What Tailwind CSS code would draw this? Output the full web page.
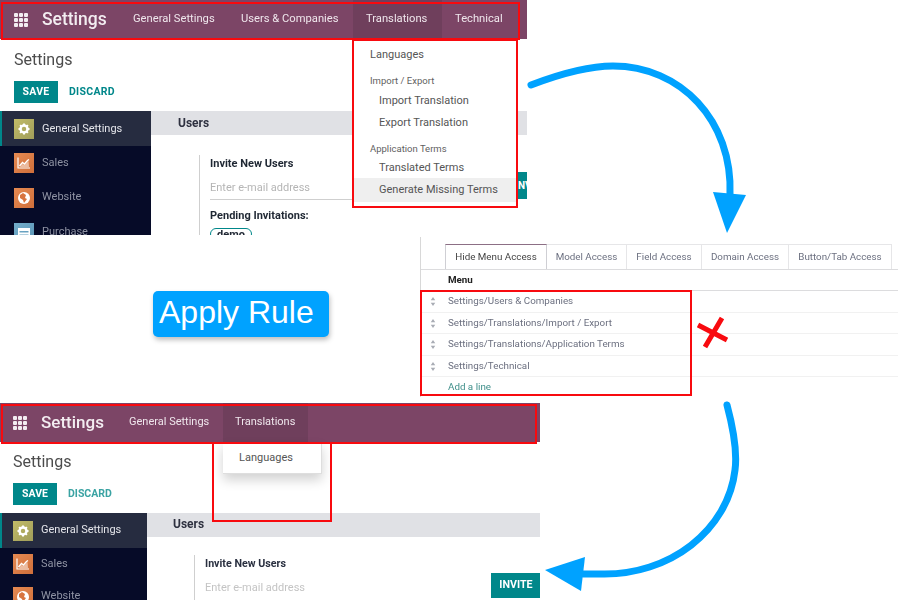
<!DOCTYPE html>
<html lang="en">
<head>
<meta charset="UTF-8">
<title>Menu access rule</title>
<script src="https://cdn.jsdelivr.net/npm/@tailwindcss/browser@4"></script>
</head>
<body class="bg-white font-['Roboto',sans-serif]">
<!-- shared icons -->
<svg class="hidden">
  <symbol id="apps" viewBox="0 0 14 14"><g fill="#f3edf1"><rect width="4" height="4" rx="1"/><rect x="5" width="4" height="4" rx="1"/><rect x="10" width="4" height="4" rx="1"/><rect y="5" width="4" height="4" rx="1"/><rect x="5" y="5" width="4" height="4" rx="1"/><rect x="10" y="5" width="4" height="4" rx="1"/><rect y="10" width="4" height="4" rx="1"/><rect x="5" y="10" width="4" height="4" rx="1"/><rect x="10" y="10" width="4" height="4" rx="1"/></g></symbol>
  <symbol id="gear" viewBox="0 0 24 24"><circle cx="12" cy="12" r="7" fill="none" stroke="white" stroke-width="5"/><path d="M12 1v22M1 12h22M4.200 4.200l15.600 15.600M19.800 4.200L4.200 19.800" stroke="white" stroke-width="4" stroke-dasharray="5 12"/></symbol>
  <symbol id="chart" viewBox="0 0 14 14"><path d="M1 1.500V12h12" fill="none" stroke="white" stroke-width="1.200"/><path d="M2.500 10l3-3.500 2 1.500 3-3.500 1.500-1" fill="none" stroke="white" stroke-width="1.400"/><path d="M3 11h9l-.5-6-4 4-2-1z" fill="white" opacity=".5"/></symbol>
  <symbol id="globe" viewBox="0 0 14 14"><circle cx="7" cy="7" r="6" fill="white"/><path d="M3 4l3-2 3 2-1 3 2 1-3 4-1-3-3-2z" fill="#d8743f"/></symbol>
  <symbol id="card" viewBox="0 0 14 14"><path d="M1 2h12v11H1zM2.500 5v1.500h9V5zm0 3.500V10h9V8.500z" fill="white" fill-rule="evenodd"/></symbol>
  <symbol id="handle" viewBox="0 0 6 10"><path d="M3 0l2.500 3.500h-5zM3 10L.5 6.500h5z" fill="#a9acb4"/></symbol>
</svg>

<div class="relative w-[898px] h-[600px] overflow-hidden bg-white">

  <!-- Screenshot 1: full menu -->
  <section class="absolute left-0 top-0 w-[527px] h-[235px] overflow-hidden bg-white blur-[0.35px]">
    <nav class="flex items-center h-[39px] bg-[#7c4566] text-[#efe6ec] text-[11.2px]">
      <svg class="ml-[14px] w-[14px] h-[14px]"><use href="#apps"/></svg>
      <span class="ml-[14px] w-[91px] text-[17.5px] font-medium text-[#f3edf1]">Settings</span>
      <span class="w-[108px]">General Settings</span>
      <span class="w-[112px]">Users &amp; Companies</span>
      <span class="flex items-center h-full w-[89px] pl-[13px] bg-[#6f3f5c]">Translations</span>
      <span class="pl-[13px]">Technical</span>
    </nav>
    <h1 class="mt-[11px] ml-[14px] text-[16px] leading-[19px] text-[#4c4c4c]">Settings</h1>
    <div class="flex items-center mt-[12px] ml-[14px] h-[22px] text-[10.5px] font-bold tracking-[0.3px]">
      <span class="flex items-center justify-center w-[44px] h-full bg-[#00878a] text-white">SAVE</span>
      <span class="ml-[11px] text-[#00878a]">DISCARD</span>
    </div>
    <div class="flex mt-[8px] h-[124px]">
      <aside class="w-[151px] bg-[#060b28] text-[11px] text-[#8f93a3]">
        <div class="flex items-center h-[35px] border-l-2 border-[#00878a] bg-[#262c40] pl-[12px] pt-[1px] text-[#e4e5ea]">
          <span class="flex items-center justify-center w-[20px] h-[20px] bg-linear-to-br from-[#c2bc68] to-[#a09d5a]"><svg class="w-[12px] h-[12px]"><use href="#gear"/></svg></span>
          <span class="ml-[8px]">General Settings</span>
        </div>
        <div class="flex items-center h-[34px] pl-[14px]">
          <span class="flex items-center justify-center w-[20px] h-[20px] bg-linear-to-br from-[#e58a52] to-[#cf6f3b]"><svg class="w-[14px] h-[14px]"><use href="#chart"/></svg></span>
          <span class="ml-[8px]">Sales</span>
        </div>
        <div class="flex items-center h-[35px] pl-[14px]">
          <span class="flex items-center justify-center w-[20px] h-[20px] bg-linear-to-br from-[#e58a52] to-[#cf6f3b]"><svg class="w-[14px] h-[14px]"><use href="#globe"/></svg></span>
          <span class="ml-[8px]">Website</span>
        </div>
        <div class="flex items-center h-[35px] pl-[14px]">
          <span class="flex items-center justify-center w-[20px] h-[20px] bg-linear-to-br from-[#74aecb] to-[#5b95b6]"><svg class="w-[14px] h-[14px]"><use href="#card"/></svg></span>
          <span class="ml-[8px]">Purchase</span>
        </div>
      </aside>
      <div class="flex-1">
        <div class="h-[24px] pl-[27px] bg-[#e0e1e5] text-[12px] font-bold leading-[24px] text-[#2e3140]">Users</div>
        <div class="ml-[48px] mt-[20px] h-[80px] border-l border-[#cfcfcf] pl-[10px] text-[#1f2733] text-[11px] font-bold">
          <div class="pt-[1px]">Invite New Users</div>
          <div class="mt-[7px] w-[150px] pb-[3px] border-b border-[#cfcfcf] text-[11px] font-normal text-[#b5b5b5]">Enter e-mail address</div>
          <div class="mt-[8px]">Pending Invitations:</div>
          <span class="inline-block mt-[3px] h-[12px] px-[6px] rounded-[8px] border border-[#00878a] text-[11px] leading-[12px]">demo</span>
        </div>
      </div>
    </div>
  </section>
  <div class="absolute left-[518px] top-[172px] w-[9px] h-[27px] bg-[#00878a] text-white text-[10px] font-bold leading-[27px] overflow-hidden">NV</div>

  <!-- dropdown of screenshot 1 -->
  <div class="absolute left-[352px] top-[39px] w-[166px] h-[169px] border-2 border-[#f80a0f] bg-white text-[11px] text-[#555] pt-[6px]">
    <div class="pl-[16px] leading-[16px]">Languages</div>
    <div class="pl-[16px] mt-[12px] text-[9.500px] leading-[12px] text-[#5f5f5f]">Import / Export</div>
    <div class="pl-[25px] mt-[6px] leading-[16px]">Import Translation</div>
    <div class="pl-[25px] mt-[6px] leading-[16px]">Export Translation</div>
    <div class="pl-[16px] mt-[12px] text-[9.500px] leading-[12px] text-[#5f5f5f]">Application Terms</div>
    <div class="pl-[25px] mt-[5px] leading-[16px]">Translated Terms</div>
    <div class="pl-[25px] mt-[2px] h-[24px] leading-[24px] bg-[#efefef]">Generate Missing Terms</div>
  </div>
  <!-- red frame around navbar 1 -->
  <div class="absolute left-[1px] top-[2px] w-[519px] h-[38px] border-2 border-[#f80a0f]"></div>

  <!-- Apply Rule label -->
  <div class="absolute left-[153px] top-[291px] flex items-center w-[176px] h-[46px] pl-[6px] pb-[5px] rounded-[5px] bg-[#00a2ff] text-white text-[32px] font-['Liberation_Sans',sans-serif] shadow-[1px_3px_5px_rgba(0,0,0,0.25)]">Apply Rule</div>

  <!-- Screenshot 2: access tabs -->
  <section class="absolute left-[420px] top-[237px] w-[478px] h-[160px] overflow-hidden border-l border-[#d8d8d8] bg-white text-[9.800px] text-[#6c7080] blur-[0.5px]">
    <div class="flex mt-[7px] ml-[24px] h-[25px] leading-[24px] text-center">
      <span class="w-[102px] bg-white border border-b-0 border-[#cfcfd4] border-t-[#8c6f85] text-[#444]">Hide Menu Access</span>
      <span class="w-[80px] border-t border-r border-[#e6e6e8]">Model Access</span>
      <span class="w-[75px] border-t border-r border-[#e6e6e8]">Field Access</span>
      <span class="w-[87px] border-t border-r border-[#e6e6e8]">Domain Access</span>
      <span class="w-[103px] border-t border-r border-[#e6e6e8]">Button/Tab Access</span>
    </div>
    <div class="h-[22px] border-t border-b border-[#dcdcde] pl-[27px] text-[#222] font-bold leading-[20px]">Menu</div>
    <div class="flex items-center h-[22px] border-b border-[#f1f1f1]"><span class="w-[27px] pl-[9px]"><svg class="w-[6px] h-[9px]"><use href="#handle"/></svg></span><span>Settings/Users &amp; Companies</span></div>
    <div class="flex items-center h-[21px] border-b border-[#f1f1f1]"><span class="w-[27px] pl-[9px]"><svg class="w-[6px] h-[9px]"><use href="#handle"/></svg></span><span>Settings/Translations/Import / Export</span></div>
    <div class="flex items-center h-[22px] border-b border-[#f1f1f1]"><span class="w-[27px] pl-[9px]"><svg class="w-[6px] h-[9px]"><use href="#handle"/></svg></span><span>Settings/Translations/Application Terms</span></div>
    <div class="flex items-center h-[21px] border-b border-[#f1f1f1]"><span class="w-[27px] pl-[9px]"><svg class="w-[6px] h-[9px]"><use href="#handle"/></svg></span><span>Settings/Technical</span></div>
    <div class="pl-[27px] h-[20px] leading-[20px] text-[#3f8f8a]">Add a line</div>
  </section>
  <div class="absolute left-[420px] top-[290px] w-[272px] h-[106px] border-2 border-[#f80a0f]"></div>

  <!-- Screenshot 3: filtered menu -->
  <section class="absolute left-0 top-[403px] w-[540px] h-[197px] overflow-hidden bg-white blur-[0.45px]">
    <nav class="flex items-center h-[39px] bg-[#7c4566] text-[#efe6ec] text-[11px]">
      <svg class="ml-[13px] w-[14px] h-[14px]"><use href="#apps"/></svg>
      <span class="ml-[14px] w-[88px] text-[17px] font-medium text-[#f3edf1]">Settings</span>
      <span class="w-[94px]">General Settings</span>
      <span class="flex items-center h-full w-[85px] pl-[12px] bg-[#6f3f5c]">Translations</span>
    </nav>
    <h2 class="mt-[10px] ml-[13px] text-[16px] leading-[19px] text-[#4c4c4c]">Settings</h2>
    <div class="flex items-center mt-[12px] ml-[13px] h-[22px] text-[10.500px] font-bold">
      <span class="flex items-center justify-center w-[44px] h-full bg-[#00878a] text-white">SAVE</span>
      <span class="ml-[11px] text-[#3aa3a3]">DISCARD</span>
    </div>
    <div class="flex mt-[8px] h-[90px]">
      <aside class="w-[147px] bg-[#060b28] text-[11px] text-[#8f93a3]">
        <div class="flex items-center h-[35px] border-l-2 border-[#00878a] bg-[#262c40] pl-[11px] text-[#e4e5ea]">
          <span class="flex items-center justify-center w-[20px] h-[20px] bg-linear-to-br from-[#c2bc68] to-[#a09d5a]"><svg class="w-[12px] h-[12px]"><use href="#gear"/></svg></span>
          <span class="ml-[8px]">General Settings</span>
        </div>
        <div class="flex items-center h-[32px] pl-[13px]">
          <span class="flex items-center justify-center w-[20px] h-[20px] bg-linear-to-br from-[#e58a52] to-[#cf6f3b]"><svg class="w-[14px] h-[14px]"><use href="#chart"/></svg></span>
          <span class="ml-[8px]">Sales</span>
        </div>
        <div class="flex items-center h-[33px] pl-[13px]">
          <span class="flex items-center justify-center w-[20px] h-[20px] bg-linear-to-br from-[#e58a52] to-[#cf6f3b]"><svg class="w-[14px] h-[14px]"><use href="#globe"/></svg></span>
          <span class="ml-[8px]">Website</span>
        </div>
      </aside>
      <div class="flex-1">
        <div class="h-[24px] pl-[26px] bg-[#e0e1e5] text-[12px] font-bold leading-[23px] text-[#2e3140]">Users</div>
        <div class="relative ml-[47px] mt-[18px] h-[60px] border-l border-[#cfcfcf] pl-[10px] text-[#2a3040] text-[10.700px] font-bold">
          <div class="pt-[1px]">Invite New Users</div>
          <div class="mt-[8px] w-[286px] pb-[3px] border-b border-[#cfcfcf] text-[11px] font-normal text-[#c4c4c4]">Enter e-mail address</div>
          <span class="absolute right-[-1px] top-[18px] flex items-center justify-center w-[50px] h-[25px] bg-[#00878a] text-white">INVITE</span>
        </div>
      </div>
    </div>
  </section>

  <!-- dropdown of screenshot 3 -->
  <div class="absolute left-[223px] top-[442px] flex items-center w-[99px] h-[32px] pl-[16px] pt-[1px] bg-white border-r border-b border-[#dedede] text-[11px] text-[#555] shadow-[0_6px_12px_rgba(0,0,0,0.18)]">Languages</div>
  <div class="absolute left-[212px] top-[443px] w-[120px] h-[79px] border-2 border-t-0 border-[#f80a0f]"></div>
  <div class="absolute left-[1px] top-[404px] w-[536px] h-[40px] border-2 border-[#f80a0f]"></div>

  <!-- arrows and cross drawn over the screenshots -->
  <svg class="absolute left-0 top-0 w-[898px] h-[600px] pointer-events-none" viewBox="0 0 898 600" fill="none">
    <path d="M531 85C565 72 590 66 613 66C680 66 733 120 730 195" stroke="#00a2ff" stroke-width="7" stroke-linecap="round"/>
    <path d="M713 192L746 195L727 233Z" fill="#00a2ff"/>
    <path d="M727 405C735 435 737 455 735 470C728 530 670 576 600 574L583 574" stroke="#00a2ff" stroke-width="7" stroke-linecap="round"/>
    <path d="M545 570L585 557L581 591Z" fill="#00a2ff"/>
    <path d="M698 325L727 340M722 318L705 347" stroke="#f80a0f" stroke-width="5"/>
  </svg>
</div>
</body>
</html>
